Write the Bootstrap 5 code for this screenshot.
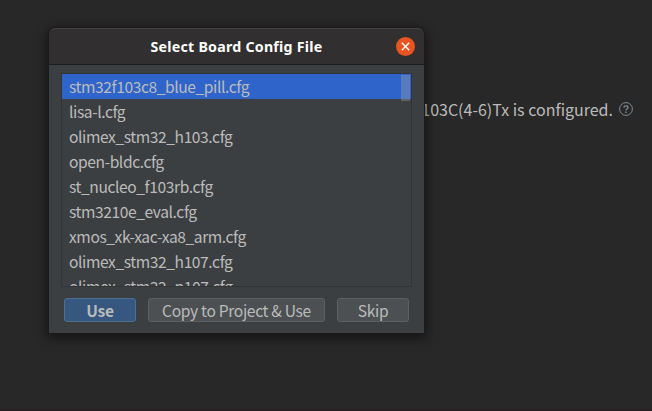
<!DOCTYPE html>
<html lang="en" data-bs-theme="dark">
<head>
<meta charset="utf-8">
<meta name="viewport" content="width=device-width, initial-scale=1">
<title>Select Board Config File</title>
<link href="https://cdn.jsdelivr.net/npm/bootstrap@5.3.0/dist/css/bootstrap.min.css" rel="stylesheet">
<style>
body{background:#282828;color:#bbb;font:16px/25px "Noto Sans CJK SC","Noto Sans",sans-serif;height:411px}
.status-line{padding:97px 19px 0 0;gap:6px}
.status-line svg{margin-top:-1px}
.board-dialog{left:49px;top:28px;width:375px;height:305px;background:#3c3f41;border-radius:7px 7px 0 0;box-shadow:0 0 0 1px #1b1b1b,0 3px 12px 2px rgba(0,0,0,.55)}
.title-bar{height:37px;background:#322f30;border-bottom:1px solid #1d1c1c;border-top:1px solid #464344;border-radius:7px 7px 0 0}
.title-bar h1{font:bold 14.2px/20px "Noto Sans",sans-serif;color:#fff;letter-spacing:.25px}
.btn-quit{right:9px;top:8px;width:19px;height:19px;background:#e95420;line-height:0}
.board-list{margin:8px 12px 0;height:214px;border:1px solid #323536;--bs-list-group-bg:transparent}
.board-list .list-group-item{height:25px;padding:0 7px;border:0;color:#bbb;background:none;font-size:15.6px;letter-spacing:-.41px;line-height:25px;flex:none}
.board-list .list-group-item.active{background:#2f65ca}
.scroll-thumb{right:1px;top:1px;width:9px;height:26px;background:rgba(166,166,166,.35)}
.actions{padding:11px 15px 0;gap:12px}
.actions .btn{height:24px;padding:0;border:1px solid #5e6060;border-radius:3px;background:#4c5052;color:#bbb;font-size:15.6px;letter-spacing:-.33px;line-height:22px}
.actions .btn-use{width:72px;background:#365880;border-color:#4c708c;font-weight:bold}
.actions .btn-copy{width:177px}
.actions .btn-skip{width:72px}
.bottom-edge{height:2px;background:#2a2024}
</style>
</head>
<body class="position-relative overflow-hidden d-flex flex-column justify-content-between">
<main class="status-line d-flex justify-content-end align-items-center">
  <span class="status-text">STM32F103C(4-6)Tx is configured.</span>
  <svg width="14" height="14" viewBox="0 0 14 14" fill="none" stroke="#7f8b91"><circle cx="7" cy="7" r="6.4"/><path d="M5 5.5C5 3.2 9 3.2 9 5.5C9 6.8 7 6.8 7 8.4" stroke-width="1.3"/><path d="M7 9.5v1.4" stroke-width="1.4"/></svg>
</main>
<div class="bottom-edge"></div>
<section class="board-dialog position-absolute" role="dialog">
  <header class="title-bar position-relative d-flex align-items-center justify-content-center">
    <h1 class="m-0">Select Board Config File</h1>
    <button class="btn-quit btn position-absolute p-0 border-0 rounded-circle d-flex align-items-center justify-content-center" aria-label="Close"><svg width="9" height="9" viewBox="0 0 9 9" stroke="#fff" stroke-width="1.4"><path d="M.8.8l7.4 7.4M8.2.8L.8 8.2"/></svg></button>
  </header>
  <div class="board-list list-group list-group-flush rounded-0 position-relative overflow-hidden">
    <div class="list-group-item active">stm32f103c8_blue_pill.cfg</div>
    <div class="list-group-item">lisa-l.cfg</div>
    <div class="list-group-item">olimex_stm32_h103.cfg</div>
    <div class="list-group-item">open-bldc.cfg</div>
    <div class="list-group-item">st_nucleo_f103rb.cfg</div>
    <div class="list-group-item">stm3210e_eval.cfg</div>
    <div class="list-group-item">xmos_xk-xac-xa8_arm.cfg</div>
    <div class="list-group-item">olimex_stm32_h107.cfg</div>
    <div class="list-group-item">olimex_stm32_p107.cfg</div>
    <div class="scroll-thumb position-absolute z-3"></div>
  </div>
  <footer class="actions d-flex">
    <button class="btn btn-use">Use</button>
    <button class="btn btn-copy">Copy to Project &amp; Use</button>
    <button class="btn btn-skip">Skip</button>
  </footer>
</section>
<script src="https://cdn.jsdelivr.net/npm/bootstrap@5.3.0/dist/js/bootstrap.bundle.min.js"></script>
</body>
</html>
